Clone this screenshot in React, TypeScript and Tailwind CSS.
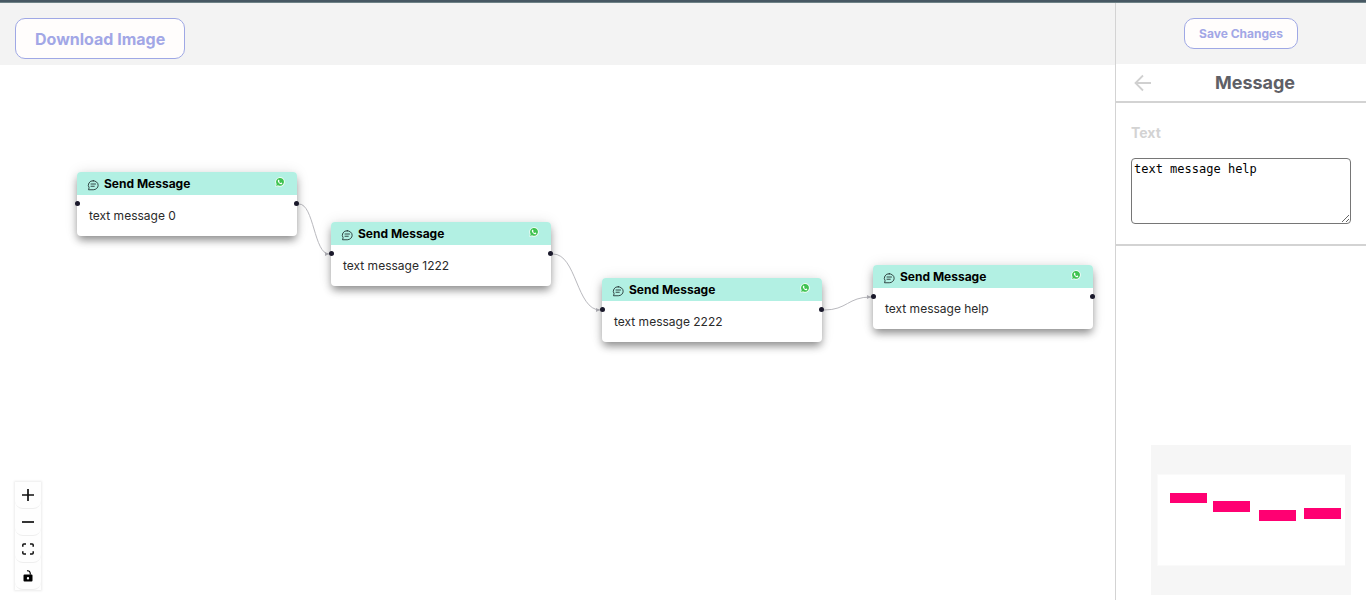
import React from "react";

type FlowNode = { id: string; x: number; y: number; text: string };

const nodes: FlowNode[] = [
  { id: "0", x: 77, y: 107, text: "text message 0" },
  { id: "1", x: 331, y: 157, text: "text message 1222" },
  { id: "2", x: 602, y: 213, text: "text message 2222" },
  { id: "3", x: 873, y: 200, text: "text message help" },
];

const NODE_WIDTH = 220;
const HANDLE_Y = 32;

function ChatIcon() {
  return (
    <svg
      viewBox="0 0 24 24"
      className="mt-0.5 size-3 shrink-0"
      fill="none"
      stroke="#1c2b2a"
      strokeWidth="1.7"
      strokeLinecap="round"
      strokeLinejoin="round"
      aria-hidden="true"
    >
      <path d="M12.500 3.500a9.800 9 0 1 1 0 18H3l1.200-4A9 9 0 0 1 12.500 3.500Z" />
      <path d="M8 10h9M8 14.500h6.500" />
    </svg>
  );
}

function WhatsAppIcon() {
  return (
    <svg viewBox="0 0 24 24" className="mb-1 size-2.5 shrink-0" aria-label="WhatsApp">
      <path d="M0.500 23.500 2.100 17.600A11.600 11.600 0 1 1 6.500 21.900Z" fill="#eefaf3" />
      <path d="M2.700 21.300 4 16.700A9.400 9.400 0 1 1 7.400 20Z" fill="#3fc351" />
      <path
        d="M8.600 6.800c-.4 0-1.900.9-1.900 2.800 0 3.300 4.600 7.700 7.900 7.700 1.700 0 2.900-1.200 2.900-2.400 0-.5-2.400-1.700-2.800-1.700-.5 0-.9 1.300-1.400 1.300-.9 0-3.400-2.300-3.400-3.200 0-.4.9-.9.900-1.400 0-.4-1-3.100-1.400-3.100Z"
        fill="#ffffff"
      />
    </svg>
  );
}

function MessageNode({ node }: { node: FlowNode }) {
  return (
    <article
      className="absolute w-[220px] rounded-[4px] bg-white shadow-[0_5px_8px_-1px_rgba(0,0,0,0.42),0_0_14px_rgba(0,0,0,0.1)]"
      style={{ left: node.x, top: node.y }}
    >
      <header className="flex h-[23px] items-center gap-[5px] rounded-t-[4px] bg-[#b2f0e3] pr-3 pl-2.5">
        <ChatIcon />
        <h3 className="flex-1 text-[12px] leading-5 font-bold text-black">Send Message</h3>
        <WhatsAppIcon />
      </header>
      <p className="px-3 pt-[11px] pb-2.5 text-[12px] leading-5 text-[#2a2a2a]">{node.text}</p>
      <span className="absolute top-[29px] -left-0.5 size-[5px] rounded-full bg-[#1a192b]" />
      <span className="absolute top-[29px] -right-0.5 size-[5px] rounded-full bg-[#1a192b]" />
    </article>
  );
}

function Edges() {
  return (
    <svg className="pointer-events-none absolute inset-0 size-full" aria-hidden="true">
      {nodes.slice(1).map((target, i) => {
        const source = nodes[i];
        const x1 = source.x + NODE_WIDTH + 2;
        const y1 = source.y + HANDLE_Y;
        const x2 = target.x - 2;
        const y2 = target.y + HANDLE_Y;
        const mid = (x1 + x2) / 2;
        return (
          <g key={target.id}>
            <path
              d={`M${x1} ${y1}C${mid} ${y1} ${mid} ${y2} ${x2} ${y2}`}
              fill="none"
              stroke="#b9b9be"
            />
            <path d={`M${x2 - 4} ${y2 - 2}L${x2} ${y2}L${x2 - 4} ${y2 + 2}Z`} fill="#b1b1b7" />
          </g>
        );
      })}
    </svg>
  );
}

const controls = [
  {
    label: "Zoom in",
    icon: <path d="M6 0v12M0 6h12" stroke="#111" strokeWidth="1.700" />,
  },
  {
    label: "Zoom out",
    icon: <path d="M0 6h12" stroke="#111" strokeWidth="1.700" />,
  },
  {
    label: "Fit view",
    icon: (
      <path
        d="M.800 3.800V2Q.800 1 1.800 1H4M8 1h2.200q1 0 1 1v1.800M11.200 8.200V10q0 1-1 1H8M4 11H1.800q-1 0-1-1V8.200"
        stroke="#111"
        strokeWidth="1.500"
      />
    ),
  },
  {
    label: "Toggle interactivity",
    icon: (
      <>
        <path
          fillRule="evenodd"
          d="M2.500 4.500h7q1 0 1 1v5q0 1-1 1h-7q-1 0-1-1v-5q0-1 1-1ZM6 7a1.200 1.200 0 1 0 0 2.400A1.200 1.200 0 0 0 6 7Z"
          fill="#000"
        />
        <path d="M5 .800Q8.200.200 8.400 4.600" stroke="#000" strokeWidth="1.200" />
      </>
    ),
  },
];

function Controls() {
  return (
    <div className="absolute bottom-2.5 left-[15px] flex flex-col bg-[#fefefe] shadow-[0_0_2px_1px_rgba(0,0,0,0.08)]">
      {controls.map((control) => (
        <button
          key={control.label}
          type="button"
          aria-label={control.label}
          className="flex h-[27px] w-[26px] items-center justify-center rounded-lg border-b border-[#eee]"
        >
          <svg viewBox="0 0 12 12" className="size-3" fill="none" aria-hidden="true">
            {control.icon}
          </svg>
        </button>
      ))}
    </div>
  );
}

function MiniMap() {
  return (
    <svg viewBox="0 0 200 150" className="h-[150px] w-[200px]" role="img" aria-label="Mini map">
      <rect width="200" height="150" fill="#f6f6f6" />
      <rect x="6" y="29" width="188" height="92" fill="#fafafa" />
      <rect x="7" y="30" width="187" height="90" fill="#fff" />
      <g fill="#ff0072" shapeRendering="crispEdges">
        <rect x="19" y="48" width="37" height="10" />
        <rect x="62" y="56" width="37" height="11" />
        <rect x="108" y="65" width="37" height="11" />
        <rect x="153" y="63" width="37" height="11" />
      </g>
    </svg>
  );
}

export default function App() {
  return (
    <div className="flex min-h-screen flex-col bg-white font-['Inter',sans-serif]">
      <div className="h-[3px] border-b border-[#6f8287] bg-[#475863]" />
      <div className="flex flex-1">
        <main className="flex min-w-0 flex-1 flex-col">
          <div className="flex bg-[#f3f3f3] px-[15px] pt-[15px] pb-1.5">
            <button
              type="button"
              className="rounded-[10px] border border-[#9fa8e5] bg-[#fffdfc] px-[19px] pt-2 pb-[7px] text-[16px] leading-6 font-bold text-[#a2a7e6]"
            >
              Download Image
            </button>
          </div>
          <section className="relative flex-1 overflow-hidden" aria-label="Flow canvas">
            <Edges />
            {nodes.map((node) => (
              <MessageNode key={node.id} node={node} />
            ))}
            <Controls />
          </section>
        </main>
        <aside className="flex w-[251px] shrink-0 flex-col border-l border-[#d3d3d3]">
          <div className="flex justify-center bg-[#f3f3f3] pt-[15px] pb-[15px]">
            <button
              type="button"
              className="rounded-[10px] border border-[#9fa8e5] bg-[#fffdfc] px-3.5 py-1 text-[12px] leading-[21px] font-bold text-[#a2a7e6]"
            >
              Save Changes
            </button>
          </div>
          <div className="flex h-[39px] items-center border-b-2 border-[#d3d3d3] px-[18px]">
            <button type="button" aria-label="Back">
              <svg
                viewBox="0 0 18 18"
                className="size-[18px]"
                fill="none"
                stroke="#d0d0d0"
                strokeWidth="1.800"
                aria-hidden="true"
              >
                <path d="M17 9H2M9 1.500 1.500 9 9 16.500" />
              </svg>
            </button>
            <h2 className="flex-1 pl-2.5 text-center text-[18px] leading-6 font-bold text-[#5f6066]">
              Message
            </h2>
          </div>
          <div className="flex flex-col gap-[15px] border-b-2 border-[#d3d3d3] px-[15px] pt-5 pb-5">
            <label htmlFor="message-text" className="text-[14px] leading-5 font-bold text-[#d3d3d3]">
              Text
            </label>
            <textarea
              id="message-text"
              defaultValue="text message help"
              className="h-[66px] w-full resize rounded-[4px] border border-[#767676] bg-white p-0.5 font-['DejaVu_Sans_Mono',monospace] text-[12px] leading-4 text-black"
            />
          </div>
          <div className="mt-auto flex justify-end pr-[15px] pb-[5px]">
            <MiniMap />
          </div>
        </aside>
      </div>
    </div>
  );
}
